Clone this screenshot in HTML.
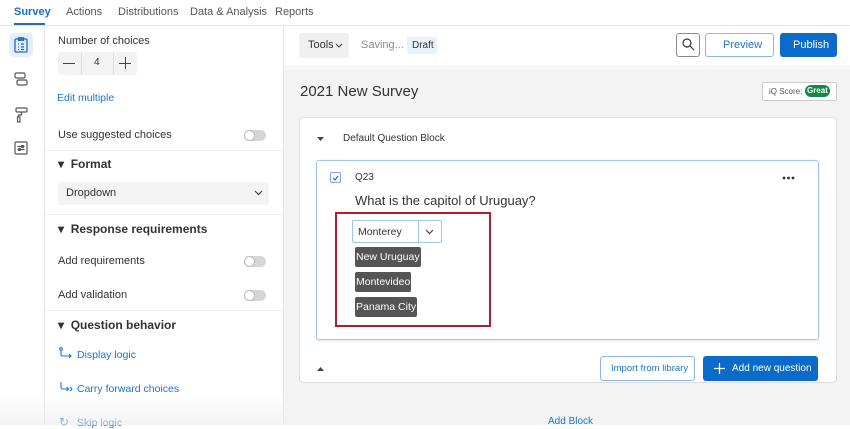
<!DOCTYPE html>
<html><head><meta charset="utf-8"><style>
*{box-sizing:border-box;margin:0;padding:0}
body{width:850px;height:425px;overflow:hidden;position:relative;font-family:"Liberation Sans",sans-serif;background:#fff;color:#333}
.a{position:absolute}
.t{position:absolute;white-space:nowrap;line-height:1}
.blue{color:#1a73d6}
.tog{position:absolute;width:22px;height:11px;border-radius:6px;background:#d6d6d6}
.tog:after{content:"";position:absolute;left:0;top:0;width:11px;height:11px;border-radius:50%;background:#fff;border:1px solid #bbb;box-sizing:border-box}
.opt{position:absolute;left:355px;height:20px;background:#555;color:#fff;font-size:10.5px;line-height:20px;padding:0 1px;border-radius:2px;white-space:nowrap}
</style></head><body>
<div class="t" style="left:14px;top:7px;font-size:11px;font-weight:bold;color:#1a6ccc">Survey</div>
<div class="a" style="left:14px;top:23px;width:31px;height:2px;background:#1a6ccc"></div>
<div class="t" style="left:66px;top:7px;font-size:11px;color:#555">Actions</div>
<div class="t" style="left:118px;top:7px;font-size:11px;color:#555">Distributions</div>
<div class="t" style="left:190px;top:7px;font-size:11px;color:#555">Data &amp; Analysis</div>
<div class="t" style="left:275px;top:7px;font-size:11px;color:#555">Reports</div>
<div class="a" style="left:0;top:25px;width:850px;height:1px;background:#e8e8e8"></div>
<div class="a" style="left:44px;top:26px;width:1px;height:399px;background:#e6e6e6"></div>
<div class="a" style="left:9px;top:33px;width:24px;height:24px;border-radius:5px;background:#e4eefa"></div>
<svg class="a" style="left:14px;top:37px" width="14" height="16" viewBox="0 0 14 16" fill="none" stroke="#1a6ccc" stroke-width="1.3"><rect x="1" y="2" width="12" height="13" rx="1"/><rect x="4.5" y="0.8" width="5" height="2.5"/><path d="M4 7h1M7 7h3M4 10h1M7 10h3M4 12.5h1M7 12.5h3"/></svg>
<svg class="a" style="left:14px;top:72px" width="14" height="14" viewBox="0 0 14 14" fill="none" stroke="#555" stroke-width="1.2"><rect x="1" y="1" width="10" height="5" rx="1.5"/><rect x="3" y="8" width="10" height="5" rx="1.5"/></svg>
<svg class="a" style="left:15px;top:107px" width="13" height="16" viewBox="0 0 13 16" fill="none" stroke="#555" stroke-width="1.2"><rect x="1" y="1" width="11" height="4" rx="1"/><path d="M6.5 5v3h-3v2"/><rect x="2.5" y="10" width="2.5" height="5"/></svg>
<svg class="a" style="left:14px;top:141px" width="14" height="14" viewBox="0 0 14 14" fill="none" stroke="#555" stroke-width="1.2"><rect x="1" y="1" width="12" height="12" rx="1"/><path d="M3.5 5.5h7M3.5 8.5h7"/><circle cx="8.5" cy="5.5" r="1"/><circle cx="5.5" cy="8.5" r="1"/></svg>
<div class="a" style="left:283px;top:26px;width:1px;height:399px;background:#e6e6e6"></div>
<div class="t" style="left:58px;top:36px;font-size:11px">Number of choices</div>
<div class="a" style="left:58px;top:52px;width:79px;height:23px;background:#f3f3f3;border-radius:3px"></div>
<div class="a" style="left:81px;top:52px;width:1px;height:23px;background:#ddd"></div>
<div class="a" style="left:113px;top:52px;width:1px;height:23px;background:#ddd"></div>
<div class="a" style="left:63px;top:63px;width:12px;height:1px;background:#444"></div>
<div class="t" style="left:94px;top:58px;font-size:10px">4</div>
<div class="a" style="left:119px;top:63px;width:12px;height:1px;background:#444"></div>
<div class="a" style="left:125px;top:57px;width:1px;height:12px;background:#444"></div>
<div class="t blue" style="left:57px;top:93px;font-size:10.5px">Edit multiple</div>
<div class="t" style="left:58px;top:130px;font-size:11px">Use suggested choices</div>
<div class="tog" style="left:244px;top:130px"></div>
<div class="a" style="left:45px;top:150px;width:238px;height:1px;background:#eee"></div>
<div class="t" style="left:58px;top:158px;font-size:12px;font-weight:bold">▾ &nbsp;Format</div>
<div class="a" style="left:58px;top:182px;width:211px;height:23px;background:#f3f3f3;border-radius:3px"></div>
<div class="t" style="left:66px;top:188px;font-size:11px">Dropdown</div>
<svg class="a" style="left:254px;top:190px" width="9" height="6" viewBox="0 0 9 6"><path d="M1 1l3.5 3.5L8 1" fill="none" stroke="#444" stroke-width="1.2"/></svg>
<div class="a" style="left:45px;top:214px;width:238px;height:1px;background:#eee"></div>
<div class="t" style="left:58px;top:223px;font-size:12px;font-weight:bold">▾ &nbsp;Response requirements</div>
<div class="t" style="left:58px;top:256px;font-size:11px">Add requirements</div>
<div class="tog" style="left:244px;top:256px"></div>
<div class="t" style="left:58px;top:290px;font-size:11px">Add validation</div>
<div class="tog" style="left:244px;top:290px"></div>
<div class="a" style="left:45px;top:310px;width:238px;height:1px;background:#eee"></div>
<div class="t" style="left:58px;top:319px;font-size:12px;font-weight:bold">▾ &nbsp;Question behavior</div>
<svg class="a" style="left:59px;top:347px" width="14" height="12" viewBox="0 0 14 12" fill="none" stroke="#1a73d6" stroke-width="1.1"><circle cx="2" cy="2" r="1.3"/><path d="M2 4v3.5q0 1.5 1.5 1.5H12M10 7l2 2-2 2"/></svg>
<div class="t blue" style="left:77px;top:350px;font-size:10.5px">Display logic</div>
<svg class="a" style="left:59px;top:381px" width="14" height="12" viewBox="0 0 14 12" fill="none" stroke="#1a73d6" stroke-width="1.1"><path d="M2 1v5q0 2 2 2h5M7.5 6l2 2-2 2M11 6l2 2-2 2"/></svg>
<div class="t blue" style="left:77px;top:384px;font-size:10.5px">Carry forward choices</div>
<div class="t blue" style="left:59px;top:416px;font-size:12px">↻</div>
<div class="t blue" style="left:77px;top:418px;font-size:10.5px">Skip logic</div>
<div class="a" style="left:0;top:395px;width:284px;height:30px;background:linear-gradient(rgba(255,255,255,0),rgba(235,235,235,.6))"></div>
<div class="a" style="left:284px;top:70px;width:566px;height:355px;background:#f3f3f3"></div>
<div class="a" style="left:284px;top:65px;width:566px;height:5px;background:#f7f7f7"></div>
<div class="a" style="left:299px;top:33px;width:50px;height:25px;background:#f0f0f0;border-radius:3px"></div>
<div class="t" style="left:308px;top:40px;font-size:11px">Tools</div>
<svg class="a" style="left:335px;top:43px" width="8" height="5" viewBox="0 0 8 5"><path d="M1 1l3 3 3-3" fill="none" stroke="#444" stroke-width="1.1"/></svg>
<div class="t" style="left:361px;top:40px;font-size:11px;color:#888">Saving...</div>
<div class="a" style="left:407px;top:37px;width:30px;height:17px;background:#eaf1fa;border-radius:2px"></div>
<div class="t" style="left:412px;top:41px;font-size:10px">Draft</div>
<div class="a" style="left:676px;top:33px;width:24px;height:24px;border:1px solid #888;border-radius:3px"></div>
<svg class="a" style="left:682px;top:38px" width="13" height="13" viewBox="0 0 13 13" fill="none" stroke="#333" stroke-width="1.2"><circle cx="5" cy="5" r="4"/><path d="M8 8l4 4"/></svg>
<div class="a" style="left:705px;top:33px;width:69px;height:24px;border:1px solid #8ab6ea;border-radius:3px;background:#fff"></div>
<div class="t blue" style="left:723px;top:40px;font-size:11px">Preview</div>
<div class="a" style="left:780px;top:33px;width:57px;height:24px;background:#0b6bcb;border-radius:3px"></div>
<div class="t" style="left:793px;top:40px;font-size:11px;color:#fff">Publish</div>
<div class="t" style="left:300px;top:84px;font-size:15px;color:#333">2021 New Survey</div>
<div class="a" style="left:762px;top:82px;width:75px;height:19px;border:1px solid #ccc;border-radius:2px;background:#fff"></div>
<div class="t" style="left:769px;top:88px;font-size:8px;color:#555">iQ Score:</div>
<div class="a" style="left:805px;top:85px;width:25px;height:12px;border-radius:6px;background:#0d8a45"></div>
<div class="t" style="left:807px;top:87px;font-size:8px;color:#fff;font-weight:bold">Great</div>
<div class="a" style="left:299px;top:117px;width:538px;height:266px;background:#fff;border:1px solid #ddd;border-radius:4px"></div>
<svg class="a" style="left:317px;top:137px" width="7" height="5"><path d="M0 0h7L3.5 4z" fill="#444"/></svg>
<div class="t" style="left:343px;top:134px;font-size:10px">Default Question Block</div>
<div class="a" style="left:316px;top:160px;width:503px;height:180px;border:1px solid #9ec5ee;border-radius:3px;box-shadow:0 1px 3px rgba(0,0,0,.1)"></div>
<div class="a" style="left:330px;top:172px;width:11px;height:11px;border:1px solid #7aa8dd;border-radius:2px"></div>
<svg class="a" style="left:332px;top:174px" width="7" height="7"><path d="M1 4l2 2 3-4" fill="none" stroke="#1a6ccc" stroke-width="1.2"/></svg>
<div class="t" style="left:355px;top:173px;font-size:10px">Q23</div>
<svg class="a" style="left:782px;top:176px" width="13" height="4"><circle cx="2" cy="2" r="1.4" fill="#333"/><circle cx="6.5" cy="2" r="1.4" fill="#333"/><circle cx="11" cy="2" r="1.4" fill="#333"/></svg>
<div class="t" style="left:355px;top:194px;font-size:13px">What is the capitol of Uruguay?</div>
<div class="a" style="left:335px;top:212px;width:156px;height:115px;border:2px solid #b81c2a"></div>
<div class="a" style="left:352px;top:220px;width:90px;height:23px;border:1px solid #9ec5ee;border-radius:2px"></div>
<div class="a" style="left:418px;top:220px;width:1px;height:23px;background:#9ec5ee"></div>
<div class="t" style="left:358px;top:227px;font-size:10.5px">Monterey</div>
<svg class="a" style="left:425px;top:229px" width="9" height="6" viewBox="0 0 9 6"><path d="M1 1l3.5 3.5L8 1" fill="none" stroke="#444" stroke-width="1.2"/></svg>
<div class="opt" style="top:247px">New Uruguay</div>
<div class="opt" style="top:272px">Montevideo</div>
<div class="opt" style="top:297px">Panama City</div>
<svg class="a" style="left:317px;top:367px" width="7" height="4"><path d="M0 4h7L3.5 0z" fill="#444"/></svg>
<div class="a" style="left:600px;top:356px;width:95px;height:25px;border:1px solid #8ab6ea;border-radius:3px"></div>
<div class="t blue" style="left:611px;top:364px;font-size:9.5px">Import from library</div>
<div class="a" style="left:703px;top:356px;width:115px;height:25px;background:#0b6bcb;border-radius:3px"></div>
<svg class="a" style="left:714px;top:363px" width="11" height="11"><path d="M5.5 0v11M0 5.5h11" stroke="#fff" stroke-width="1.2"/></svg>
<div class="t" style="left:732px;top:364px;font-size:10px;color:#fff">Add new question</div>
<div class="t blue" style="left:548px;top:417px;font-size:10px">Add Block</div>
</body></html>
